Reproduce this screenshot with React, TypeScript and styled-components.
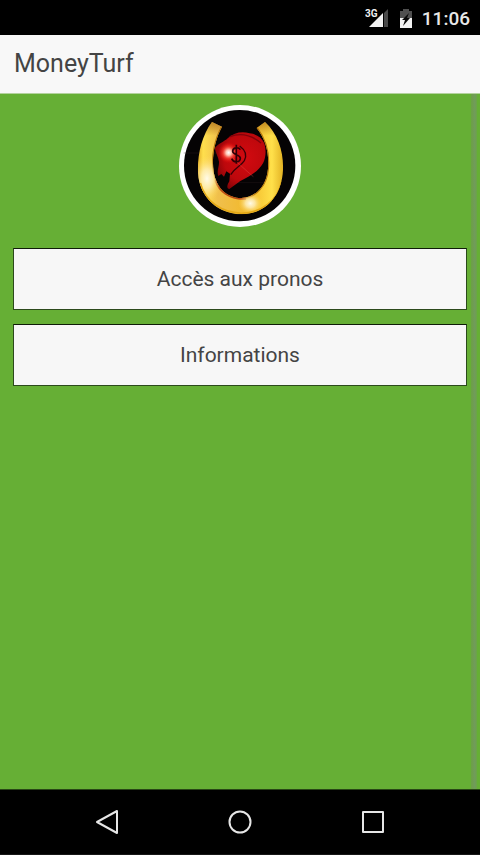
import React from "react";
import styled, { createGlobalStyle } from "styled-components";

const GlobalStyle = createGlobalStyle`
  * { box-sizing: border-box; }
  body { margin: 0; background: #000; font-family: Roboto, "Noto Sans", sans-serif; }
`;

const Screen = styled.div`
  display: flex;
  flex-direction: column;
  min-height: 100vh;
`;

const StatusBar = styled.div`
  display: flex;
  align-items: center;
  justify-content: flex-end;
  height: 35px;
  padding: 2px 10px 0 0;
  background: #000;
  color: #e8e8e8;
`;

const StatusIcon = styled.svg`
  display: block;
  margin-right: 9px;
`;

const Clock = styled.time`
  font-size: 19px;
  line-height: 24px;
  font-weight: 500;
`;

const Header = styled.header`
  display: flex;
  align-items: center;
  height: 59px;
  padding: 0 14px;
  background: #f8f8f8;
  border-bottom: 1px solid #b3d29d;
`;

const Title = styled.h1`
  margin: 0;
  color: #444;
  font-size: 25px;
  line-height: 32px;
  font-weight: 400;
`;

const Page = styled.div`
  flex: 1;
  display: flex;
  padding-right: 3px;
  background: #66af35;
`;

const Content = styled.main`
  flex: 1;
  min-width: 0;
  display: flex;
  flex-direction: column;
  align-items: center;
  padding: 11px 4px 14px 13px;
`;

const ScrollTrack = styled.div`
  width: 6px;
  background: linear-gradient(to right, #6ca046, #719b5b 60%, #6aa546);
`;

const Logo = styled.svg`
  display: block;
  width: 122px;
  height: 122px;
  margin-bottom: 21px;
`;

const Menu = styled.nav`
  display: grid;
  gap: 14px;
  width: 100%;
`;

const MenuButton = styled.button`
  width: 100%;
  height: 62px;
  padding: 0;
  border: 1px solid #2c4a1c;
  border-top-color: #0f1c08;
  border-radius: 0;
  background: #f7f7f7;
  color: #444;
  font-family: inherit;
  font-size: 21px;
  line-height: 28px;
  cursor: pointer;
`;

const SystemBar = styled.nav`
  display: flex;
  justify-content: center;
  gap: 85px;
  height: 66px;
  padding-top: 8px;
  background: #000;
  border-top: 1px solid #294716;
  border-bottom: 1px solid #171717;
`;

const SystemButton = styled.button`
  display: grid;
  place-items: center;
  width: 48px;
  height: 48px;
  padding: 0;
  border: 0;
  background: transparent;
  color: #e6e6e6;
  cursor: pointer;
`;

function SignalIcon() {
  return (
    <StatusIcon width="25" height="21" viewBox="0 0 25 21" role="img" aria-label="3G">
      <path d="M19 5L23 1V19H19Z" fill="#484848" />
      <path d="M4 19L18 5V19Z" fill="#f2f2f2" />
      <text x="0" y="9" fontSize="10" fontWeight="700" fill="#f0f0f0">3G</text>
    </StatusIcon>
  );
}

function BatteryIcon() {
  return (
    <StatusIcon width="14" height="20" viewBox="0 0 14 20" aria-hidden="true">
      <path d="M4 0H10V2H13V10H1V2H4Z" fill="#505050" />
      <path d="M1 9H13V19H1Z" fill="#f2f2f2" />
      <path d="M10 4L3 11H6L4 17L11 9H8Z" fill="#080808" />
    </StatusIcon>
  );
}

function MoneyTurfLogo() {
  return (
    <Logo viewBox="29 29 366 366" role="img" aria-label="MoneyTurf">
      <defs>
        <linearGradient id="gold" x1="0" y1="0" x2="1" y2="0">
          <stop offset="0" stopColor="#d89b17" />
          <stop offset=".08" stopColor="#ffdf4d" />
          <stop offset=".25" stopColor="#f0bf4c" />
          <stop offset=".6" stopColor="#f2b92a" />
          <stop offset=".86" stopColor="#ffe04a" />
          <stop offset="1" stopColor="#e0ad20" />
        </linearGradient>
        <radialGradient id="shine">
          <stop offset="0" stopColor="#fffbe9" />
          <stop offset=".4" stopColor="#fff0be" stopOpacity=".8" />
          <stop offset="1" stopColor="#ffd552" stopOpacity="0" />
        </radialGradient>
        <radialGradient id="horse" cx=".6" cy=".45" r=".7">
          <stop offset="0" stopColor="#d20a10" />
          <stop offset=".6" stopColor="#bd080c" />
          <stop offset="1" stopColor="#6d0206" />
        </radialGradient>
        <radialGradient id="spark">
          <stop offset="0" stopColor="#fff" />
          <stop offset=".25" stopColor="#ffc5b1" />
          <stop offset=".55" stopColor="#ff4938" stopOpacity=".7" />
          <stop offset="1" stopColor="#e00" stopOpacity="0" />
        </radialGradient>
        <linearGradient id="tip" x1="0" y1="0" x2="0" y2="1">
          <stop offset="0" stopColor="#9c5a0e" stopOpacity=".7" />
          <stop offset="1" stopColor="#9c5a0e" stopOpacity="0" />
        </linearGradient>
        <clipPath id="shoe">
          <path d="M128 80L158 94C137 132 126 184 133 229C141 279 174 308 216 308C262 306 292 269 296 220C300 173 289 132 262 98L287 80C330 120 346 180 340 237C332 310 281 357 218 357C147 357 90 306 86 233C84 177 97 122 128 80Z" />
        </clipPath>
      </defs>
      <circle cx="212" cy="212" r="183" fill="#fff" />
      <circle cx="211" cy="211" r="167" fill="#050304" />
      <path d="M43 173H150M185 262H296" stroke="#352027" strokeWidth="1" />
      <path d="M136 158C148 144 163 140 176 128C194 112 217 107 241 114C262 116 277 126 285 144C291 163 290 186 281 204C267 229 242 242 213 257L180 281C170 279 174 268 180 258L182 235L171 228L164 244L156 236L147 242C141 229 150 213 149 199C147 184 139 174 136 158Z" fill="url(#horse)" />
      <path d="M181 124C215 111 246 119 275 143" fill="none" stroke="#80030a" strokeWidth="4" />
      <path d="M211 152C229 165 232 182 225 196C214 213 196 217 184 238" fill="none" stroke="#390106" strokeWidth="4" />
      <path d="M190 188C205 202 226 222 252 244" fill="none" stroke="#ef6054" strokeWidth="2" opacity=".5" />
      <circle cx="178" cy="172" r="32" fill="url(#spark)" />
      <path d="M213 163C207 153 190 157 190 168C190 180 213 176 213 189C213 202 192 203 187 190M201 148V205" fill="none" stroke="#300006" strokeWidth="5" />
      <g clipPath="url(#shoe)">
        <path d="M80 75H345V360H80Z" fill="url(#gold)" />
        <path d="M262 97C289 132 300 173 296 220C292 269 262 306 216 308C174 308 141 279 133 229C126 184 137 132 158 94" fill="none" stroke="#b5740c" strokeWidth="6" />
        <path d="M141 254C151 286 181 309 230 308" fill="none" stroke="#b53a12" strokeWidth="12" opacity=".8" />
        <ellipse cx="113" cy="250" rx="44" ry="72" fill="url(#shine)" />
        <ellipse cx="243" cy="324" rx="36" ry="32" fill="url(#shine)" />
        <path d="M80 75H345V121H80Z" fill="url(#tip)" />
        <path d="M93 263C108 321 158 351 216 354C279 353 325 314 337 259" fill="none" stroke="#e4a817" strokeWidth="5" />
      </g>
    </Logo>
  );
}

export default function App() {
  return (
    <>
      <GlobalStyle />
      <Screen>
        <StatusBar>
          <SignalIcon />
          <BatteryIcon />
          <Clock>11:06</Clock>
        </StatusBar>
        <Header>
          <Title>MoneyTurf</Title>
        </Header>
        <Page>
          <Content>
            <MoneyTurfLogo />
            <Menu aria-label="Menu">
              <MenuButton type="button">Accès aux pronos</MenuButton>
              <MenuButton type="button">Informations</MenuButton>
            </Menu>
          </Content>
          <ScrollTrack />
        </Page>
        <SystemBar aria-label="Navigation">
          <SystemButton type="button" aria-label="Retour">
            <svg width="24" height="26" viewBox="0 0 24 26" fill="none" stroke="currentColor" strokeWidth="2" strokeLinejoin="round">
              <path d="M2 13L22 2V24Z" />
            </svg>
          </SystemButton>
          <SystemButton type="button" aria-label="Accueil">
            <svg width="24" height="24" viewBox="0 0 24 24" fill="none" stroke="currentColor" strokeWidth="2">
              <circle cx="12" cy="12" r="10.5" />
            </svg>
          </SystemButton>
          <SystemButton type="button" aria-label="Applications récentes">
            <svg width="24" height="24" viewBox="0 0 24 24" fill="none" stroke="currentColor" strokeWidth="2" strokeLinejoin="round">
              <path d="M2 2H22V22H2Z" />
            </svg>
          </SystemButton>
        </SystemBar>
      </Screen>
    </>
  );
}
